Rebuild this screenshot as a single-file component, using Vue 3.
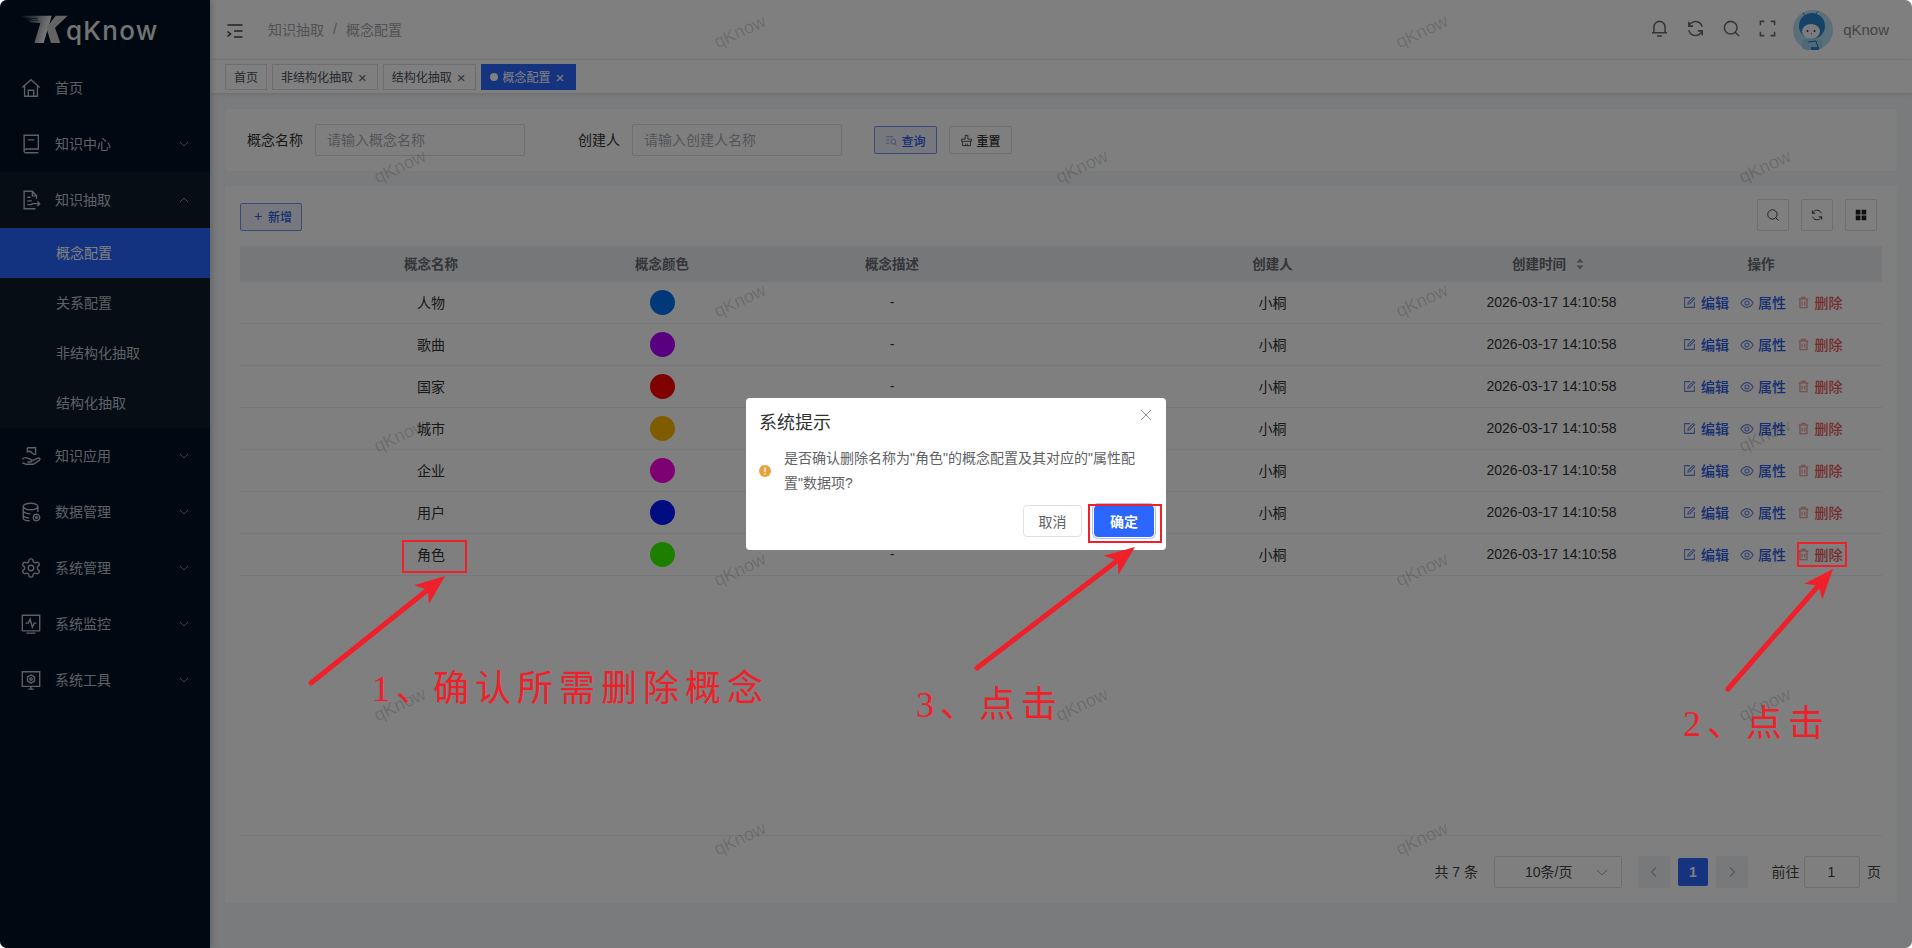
<script setup>
const icons = {
  home: 'M2.5 11.5 12 3l9.5 8.5M5 9.5V21h14V9.5M9 21v-6.5h6V21',
  book: 'M4.5 19.5V2.5h15.5v15H7a2.2 2.2 0 0 0-2.5 2 1.8 1.8 0 0 0 2.5 2h13M8.5 7.5h7',
  doc: 'M18 10.5V7.5L13.5 2.5H4.5v19H17M13.5 2.5v5H18M8 9h3.5M8 13h5M8 17h5.5M12.5 16h9M19 13.5l2.5 2.5-2.5 2.5',
  hand: 'M8 3h9v7.5M8 3v4.5c2.5-1.5 4-.5 5.5 1.5 1 1 2.5 1.5 3.5 1.5M2.5 15.5c2-2 4.5-2 6.5-1l3 1.5c1.5.8 1 2.5-.5 2.5H8M12 17.5l7.5-3.2c2-.5 3 1.2 1.5 2.5L14.5 21H6.5l-4-1.5',
  db: 'M3.5 6c0-2 3.8-3.5 8-3.5s8 1.5 8 3.5-3.8 3.5-8 3.5-8-1.5-8-3.5zM3.5 6v12.5c0 1.8 3 3 7 3M19.5 6v6M3.5 10.5c0 2 3.8 3.5 8 3.5M3.5 15c0 2 3 3.3 6.5 3.5M14.5 18a3.5 3.5 0 1 0 7 0 3.5 3.5 0 1 0-7 0zM17 18a1 1 0 1 0 2 0 1 1 0 1 0-2 0z',
  gear: 'M12.22 2h-.44a2 2 0 0 0-2 2v.18a2 2 0 0 1-1 1.73l-.43.25a2 2 0 0 1-2 0l-.15-.08a2 2 0 0 0-2.73.73l-.22.38a2 2 0 0 0 .73 2.73l.15.1a2 2 0 0 1 1 1.72v.51a2 2 0 0 1-1 1.74l-.15.09a2 2 0 0 0-.73 2.73l.22.38a2 2 0 0 0 2.73.73l.15-.08a2 2 0 0 1 2 0l.43.25a2 2 0 0 1 1 1.73V20a2 2 0 0 0 2 2h.44a2 2 0 0 0 2-2v-.18a2 2 0 0 1 1-1.73l.43-.25a2 2 0 0 1 2 0l.15.08a2 2 0 0 0 2.73-.73l.22-.39a2 2 0 0 0-.73-2.73l-.15-.08a2 2 0 0 1-1-1.74v-.5a2 2 0 0 1 1-1.74l.15-.09a2 2 0 0 0 .73-2.73l-.22-.38a2 2 0 0 0-2.73-.73l-.15.08a2 2 0 0 1-2 0l-.43-.25a2 2 0 0 1-1-1.73V4a2 2 0 0 0-2-2zM9 12a3 3 0 1 0 6 0 3 3 0 1 0-6 0z',
  pulse: 'M2.5 2.5h19v17h-19zM7 22h10M6 11h3l2-4.5 2.5 9 2-4.5h2.5',
  tool: 'M2.5 3h19v16h-19zM9 22h6M12 19v3M12 6.5l3.8 2.2v4.6L12 15.5l-3.8-2.2V8.7zM10.7 11a1.3 1.3 0 1 0 2.6 0 1.3 1.3 0 1 0-2.6 0z',
  bell: 'M5 17.5V10a7 7 0 0 1 14 0v7.5M2.5 17.5h19M9 21.5h6',
  refresh: 'M20.5 10A8.8 8.8 0 0 0 5.5 6L3.5 8.5M3.5 14A8.8 8.8 0 0 0 18.5 18l2-2.5M3.5 3.5v5.5h5.5M20.5 20.5V15H15',
  search: 'M3 11a8 8 0 1 0 16 0 8 8 0 1 0-16 0zM17 17l4.5 4.5',
  full: 'M3 8V3h5M16 3h5v5M21 16v5h-5M8 21H3v-5',
  edit: 'M13 3H3v18h18V11M9 15l.8-3.5L19 2.5 21.5 5l-9 9.2z',
  eye: 'M1.5 12C5 6 9 4.5 12 4.5S19 6 22.5 12C19 18 15 19.5 12 19.5S5 18 1.5 12zM8.5 12a3.5 3.5 0 1 0 7 0 3.5 3.5 0 1 0-7 0z',
  trash: 'M3 5.5h18M9 5.5v-3h6v3M5.5 5.5v16h13v-16M9.5 10v7.5M14.5 10v7.5',
  query: 'M2 5h13M2 11h6M2 17h6M11 14a4.5 4.5 0 1 0 9 0 4.5 4.5 0 1 0-9 0zM18.5 18l3 3',
  reset: 'M9.5 2.5h5v7H21v4H3v-4h6.5zM4.5 13.5v8h15v-8M10 21.5v-4M14 21.5v-4',
  sync: 'M19.5 9A8 8 0 0 0 6 6.5L4 9M4.5 15A8 8 0 0 0 18 17.5l2-2.5M4 4v5h5M20 20v-5h-5',
}

const menusTop = [
  { text: '首页', icon: 'home' },
  { text: '知识中心', icon: 'book', arrow: true },
]
const subs = ['概念配置', '关系配置', '非结构化抽取', '结构化抽取']
const menusBottom = [
  { text: '知识应用', icon: 'hand' },
  { text: '数据管理', icon: 'db' },
  { text: '系统管理', icon: 'gear' },
  { text: '系统监控', icon: 'pulse' },
  { text: '系统工具', icon: 'tool' },
]
const tags = ['非结构化抽取', '结构化抽取']
const topIcons = ['bell', 'refresh', 'search', 'full']
const rows = [
  { name: '人物', color: '#0070f0' },
  { name: '歌曲', color: '#b000ff' },
  { name: '国家', color: '#ff0000' },
  { name: '城市', color: '#ffb800' },
  { name: '企业', color: '#ff00e6' },
  { name: '用户', color: '#0018ff' },
  { name: '角色', color: '#38ff00' },
]

const watermarks = []
;[32, 167, 301, 436, 570, 705, 839].forEach((y, i) => {
  const xs = i % 2 === 0 ? [740, 1422] : [400, 1082, 1765]
  xs.forEach((x) => watermarks.push({ left: x + 'px', top: y + 'px' }))
})

function arrow(x1, y1, x2, y2) {
  const len = Math.hypot(x2 - x1, y2 - y1)
  const ux = (x2 - x1) / len
  const uy = (y2 - y1) / len
  const nx = -uy
  const ny = ux
  const at = (back, side) => `${(x2 - ux * back + nx * side).toFixed(1)},${(y2 - uy * back + ny * side).toFixed(1)}`
  return {
    shaft: { x1, y1, x2: x2 - ux * 18, y2: y2 - uy * 18 },
    head: [at(0, 0), at(30, 12), at(22, 0), at(30, -12)].join(' '),
  }
}
const arrows = [arrow(311, 683, 445, 576), arrow(1728, 689, 1833, 569), arrow(977, 668, 1135, 547)]
const boxes = [
  { x: 403, y: 541, w: 63, h: 31 },
  { x: 1798, y: 543, w: 48, h: 23 },
  { x: 1089, y: 505, w: 72, h: 37 },
]
</script>

<template>
  <div class="page">
    <aside class="side">
      <div class="logo">
        <svg class="logo-mark" viewBox="0 0 150 95" width="50" height="31.7">
          <defs>
            <linearGradient id="kg" x1="0" y1="0" x2="1" y2="0.3">
              <stop offset="0" stop-color="#1a2430" />
              <stop offset="1" stop-color="#fff" />
            </linearGradient>
          </defs>
          <path d="M4 2H92L68 84H40L58 24L30 22L14 14L34 14L4 6Z" fill="url(#kg)" />
          <path d="M8 10H50M20 16H52" stroke="#001024" stroke-width="2" />
          <path d="M140 2H104L76 38L90 84H118L102 38Z" fill="#c8c8c8" />
        </svg>
        <span class="logo-text">qKnow</span>
      </div>
      <nav>
        <div v-for="m in menusTop" :key="m.text" class="menu">
          <svg class="m-icon" viewBox="0 0 24 24"><path :d="icons[m.icon]" /></svg>
          <span class="m-text">{{ m.text }}</span>
          <svg v-if="m.arrow" class="chev" viewBox="0 0 10 10"><path d="M1 3l4 4 4-4" /></svg>
        </div>
        <div class="group">
          <div class="menu">
            <svg class="m-icon" viewBox="0 0 24 24"><path :d="icons.doc" /></svg>
            <span class="m-text">知识抽取</span>
            <svg class="chev" viewBox="0 0 10 10"><path d="M1 7l4-4 4 4" /></svg>
          </div>
          <div v-for="(s, i) in subs" :key="s" class="sub" :class="{ active: i === 0 }">{{ s }}</div>
        </div>
        <div v-for="m in menusBottom" :key="m.text" class="menu">
          <svg class="m-icon" viewBox="0 0 24 24"><path :d="icons[m.icon]" /></svg>
          <span class="m-text">{{ m.text }}</span>
          <svg class="chev" viewBox="0 0 10 10"><path d="M1 3l4 4 4-4" /></svg>
        </div>
      </nav>
    </aside>

    <div class="main">
      <header class="topbar">
        <svg class="collapse" viewBox="0 0 16 14"><path d="M0.5 1h15M7 7h8.5M7 13h8.5M0.5 7.5l3 2.5-3 2.5" /></svg>
        <span class="crumb">知识抽取</span>
        <span class="crumb slash">/</span>
        <span class="crumb">概念配置</span>
        <div class="top-right">
          <svg v-for="n in topIcons" :key="n" class="t-icon" viewBox="0 0 24 24"><path :d="icons[n]" /></svg>
          <svg class="avatar" viewBox="0 0 40 40">
            <circle cx="20" cy="20" r="20" fill="#b6def6" />
            <path d="M12 6 10 2.5M23 4l2-3" stroke="#2a7fc8" stroke-width="1" fill="none" />
            <circle cx="19" cy="16" r="13" fill="#2a86d0" />
            <ellipse cx="18" cy="21.5" rx="9" ry="7.5" fill="#f4f8fa" />
            <circle cx="14.5" cy="21" r="1" fill="#123a60" />
            <circle cx="21.5" cy="21" r="1" fill="#123a60" />
            <path d="M18 24h1" stroke="#123a60" stroke-width=".8" />
            <path d="M9 38V30c5-2 15-2 20 0v8a20 20 0 0 1-20 0z" fill="#9fd0ee" />
            <path d="M15 32l8-1 2 6" stroke="#1f6fb8" stroke-width="1" fill="none" />
            <path d="M18 37h8v2.600a20 20 0 0 1-8 .4z" fill="#2a86d0" />
          </svg>
          <span class="uname">qKnow</span>
        </div>
      </header>

      <div class="tagbar">
        <span class="tag">首页</span>
        <span v-for="t in tags" :key="t" class="tag close">{{ t }}<i class="x">×</i></span>
        <span class="tag close on"><b class="dot"></b>概念配置<i class="x">×</i></span>
      </div>

      <section class="card search">
        <label>概念名称</label>
        <input class="ipt" placeholder="请输入概念名称" />
        <label class="l2">创建人</label>
        <input class="ipt" placeholder="请输入创建人名称" />
        <button class="btn primary first">
          <svg viewBox="0 0 24 24"><path :d="icons.query" /></svg>查询
        </button>
        <button class="btn">
          <svg viewBox="0 0 24 24"><path :d="icons.reset" /></svg>重置
        </button>
      </section>

      <section class="card list">
        <div class="tools">
          <button class="btn primary add"><span class="plus">+</span>新增</button>
          <div class="tool-right">
            <span class="sq"><svg viewBox="0 0 24 24"><path :d="icons.search" /></svg></span>
            <span class="sq"><svg viewBox="0 0 24 24"><path :d="icons.sync" /></svg></span>
            <span class="sq">
              <svg viewBox="0 0 24 24"><path class="solid" d="M3 3h8v8H3zM13 3h8v8h-8zM3 13h8v8H3zM13 13h8v8h-8z" /></svg>
            </span>
          </div>
        </div>
        <div class="table">
          <div class="tr th">
            <div>概念名称</div>
            <div>概念颜色</div>
            <div>概念描述</div>
            <div>创建人</div>
            <div class="sort">创建时间
              <svg viewBox="0 0 8 12" width="8" height="12"><path d="M4 0.5 7.5 4.5H.5zM4 11.5.5 7.5h7z" /></svg>
            </div>
            <div>操作</div>
          </div>
          <div v-for="r in rows" :key="r.name" class="tr td">
            <div>{{ r.name }}</div>
            <div class="colour"><span class="swatch" :style="{ background: r.color }"></span></div>
            <div>-</div>
            <div>小桐</div>
            <div class="time">2026-03-17 14:10:58</div>
            <div class="ops">
              <span class="op"><svg viewBox="0 0 24 24"><path :d="icons.edit" /></svg>编辑</span>
              <span class="op"><svg viewBox="0 0 24 24"><path :d="icons.eye" /></svg>属性</span>
              <span class="op del"><svg viewBox="0 0 24 24"><path :d="icons.trash" /></svg>删除</span>
            </div>
          </div>
        </div>
        <div class="pager">
          <span class="total">共 7 条</span>
          <span class="select">10条/页
            <svg viewBox="0 0 12 12" width="12" height="12"><path d="M1 4l5 5 5-5" /></svg>
          </span>
          <span class="pg">
            <svg viewBox="0 0 12 12" width="12" height="12"><path d="M8 1.5 3.5 6 8 10.5" /></svg>
          </span>
          <span class="num">1</span>
          <span class="pg">
            <svg viewBox="0 0 12 12" width="12" height="12"><path d="M4 1.5 8.5 6 4 10.5" /></svg>
          </span>
          <span class="goto">前往</span>
          <input class="jump" value="1" />
          <span class="unit">页</span>
        </div>
      </section>
    </div>

    <div class="wm-layer">
      <span v-for="(w, i) in watermarks" :key="i" class="wm" :style="w">qKnow</span>
    </div>

    <div class="mask"></div>

    <div class="dialog">
      <div class="d-head">
        <span>系统提示</span>
        <svg class="d-close" viewBox="0 0 12 12" width="12" height="12"><path d="M1 1l10 10M11 1 1 11" /></svg>
      </div>
      <div class="d-body">
        <svg class="warn" viewBox="0 0 12 12" width="12" height="12">
          <circle cx="6" cy="6" r="6" fill="#e6a23c" />
          <path d="M6 2.5v4.2M6 8.3v1.2" stroke="#fff" stroke-width="1.4" />
        </svg>
        <p>是否确认删除名称为"角色"的概念配置及其对应的"属性配置"数据项?</p>
      </div>
      <div class="d-foot">
        <button class="d-btn">取消</button>
        <button class="d-btn ok">确定</button>
      </div>
    </div>

    <svg class="marks" viewBox="0 0 1912 948" width="1912" height="948">
      <rect v-for="(b, i) in boxes" :key="'b' + i" :x="b.x" :y="b.y" :width="b.w" :height="b.h" class="mark-box" />
      <g v-for="(a, i) in arrows" :key="'a' + i">
        <line :x1="a.shaft.x1" :y1="a.shaft.y1" :x2="a.shaft.x2" :y2="a.shaft.y2" class="mark-line" />
        <polygon :points="a.head" class="mark-head" />
      </g>
    </svg>
    <span class="note n1">1<i class="pun">、</i>确认所需删除概念</span>
    <span class="note n2">3<i class="pun">、</i>点击</span>
    <span class="note n3">2<i class="pun">、</i>点击</span>
  </div>
</template>

<style>
html, body { margin: 0; background: #fff; }
</style>

<style scoped>
* { box-sizing: border-box; }
.page {
  position: relative;
  display: flex;
  width: 1912px;
  height: 948px;
  overflow: hidden;
  border-radius: 7px;
  background: #f5f6f8;
  font-family: "Liberation Sans", "Noto Sans CJK SC", sans-serif;
  font-size: 14px;
  color: #333;
}
.side {
  flex: 0 0 210px;
  background: #001024;
  color: #b9c2cb;
  box-shadow: 2px 0 6px rgba(0, 21, 41, .2);
  z-index: 1;
}
.logo { height: 60px; display: flex; align-items: center; padding-left: 21px; }
.logo-mark { margin-right: -5px; margin-top: 1px; }
.logo-text {
  font-family: Inter, "Liberation Sans", sans-serif;
  font-size: 26px;
  font-weight: 500;
  letter-spacing: 1.2px;
  color: #e6e6e6;
}
.menu { height: 56px; display: flex; align-items: center; padding-left: 20px; position: relative; }
.m-text { margin-top: -2px; }
.m-icon { width: 22px; height: 22px; margin-right: 13px; fill: none; stroke: currentColor; stroke-width: 1.5; }
.chev { position: absolute; left: 179px; top: 23px; width: 10px; height: 10px; fill: none; stroke: currentColor; stroke-width: 1; opacity: .75; }
.group { background: #0c1b2b; }
.sub { height: 50px; line-height: 50px; padding-left: 56px; }
.sub.active { background: #2664ff; color: #fff; }

.main { flex: 1; display: flex; flex-direction: column; min-width: 0; }
.topbar {
  height: 60px;
  flex: none;
  display: flex;
  align-items: center;
  padding-left: 17px;
  background: #fff;
  border-bottom: 1px solid #f2f2f2;
}
.collapse { width: 16px; height: 14px; margin-right: 25px; fill: none; stroke: #444; stroke-width: 1.6; margin-top: 2px; }
.crumb { color: #a2a5ab; margin-top: -2px; }
.slash { margin: -2px 9px 0; }
.top-right { margin-left: auto; display: flex; align-items: center; padding-right: 23px; }
.t-icon { width: 19px; height: 19px; margin-right: 17px; fill: none; stroke: #6b6b6b; stroke-width: 1.9; margin-top: -2px; }
.t-icon:nth-child(4) { margin-right: 16px; }
.avatar { width: 40px; height: 40px; }
.uname { margin-left: 10px; font-size: 15px; color: #8a8a8a; }

.tagbar {
  height: 33px;
  flex: none;
  display: flex;
  gap: 5px;
  padding: 4px 0 0 15px;
  background: #fff;
  box-shadow: 0 1px 4px rgba(0, 0, 0, .12);
  position: relative;
}
.tag {
  height: 26px;
  padding: 0 8px 2px;
  display: inline-flex;
  align-items: center;
  border: 1px solid #d8dce5;
  font-size: 12px;
  color: #495060;
  background: #fff;
}
.tag.close { padding-right: 9px; }
.tag.close:nth-child(2) { padding-right: 10px; }
.tag.close.on { padding-right: 11px; }
.x { font-style: normal; font-size: 15px; margin-left: 5px; margin-top: 2px; line-height: 1; color: #666; font-family: "Liberation Sans", sans-serif; }
.tag.on { background: #2a66ff; border-color: #2a66ff; color: #fff; }
.tag.on .x { color: #fff; }
.dot { width: 8px; height: 8px; border-radius: 50%; background: #fff; margin-right: 5px; margin-top: 2px; }

.card { background: #fff; margin: 0 15px; border-radius: 2px; }
.search {
  margin-top: 16px;
  height: 62px;
  flex: none;
  display: flex;
  align-items: center;
  padding-left: 22px;
}
.search label { margin: -2px 12px 0 0; color: #333; }
.search .l2 { margin-left: 53px; }
.ipt {
  width: 210px;
  height: 32px;
  border: 1px solid #dcdfe6;
  border-radius: 2px;
  padding: 0 11px;
  font: inherit;
  color: #606266;
  outline: none;
}
.ipt::placeholder { color: #a8abb2; }
.btn {
  height: 28px;
  width: 63px;
  display: inline-flex;
  align-items: center;
  justify-content: center;
  gap: 3px;
  border: 1px solid #dcdfe6;
  border-radius: 2px;
  background: #fff;
  font: inherit;
  font-size: 12px;
  font-weight: 500;
  color: #333;
  padding: 0;
  margin-left: 12px;
}
.btn svg { width: 13px; height: 13px; fill: none; stroke: currentColor; stroke-width: 1.5; }
.btn.primary { background: #eef1fb; border-color: #6f94f0; color: #2a5ae6; }
.btn.first { margin-left: 32px; }
.btn.primary svg { stroke: #7a8fc8; }

.list { flex: none; height: 717px; margin-top: 15px; padding: 13px 15px 15px; display: flex; flex-direction: column; }
.tools { height: 32px; display: flex; justify-content: space-between; align-items: flex-end; margin-bottom: 15px; flex: none; }
.add { margin-left: 0; width: 62px; padding: 0 0 2px 4px; }
.plus { font-size: 14px; font-weight: 400; margin-right: 3px; }
.tool-right { display: flex; gap: 12px; padding-right: 5px; }
.sq {
  width: 32px;
  height: 32px;
  border: 1px solid #dcdfe6;
  border-radius: 2px;
  display: flex;
  align-items: center;
  justify-content: center;
}
.sq svg { width: 14px; height: 14px; fill: none; stroke: #333; stroke-width: 1.6; }
.sq svg .solid { fill: #222; stroke: none; }

.table { flex: 1; border-bottom: 1px solid #ebeef5; }
.tr { display: grid; grid-template-columns: 382px 80px 380px 381px 177px 242px; align-items: center; text-align: center; }
.tr > div { min-width: 0; }
.th { height: 36px; background: #eceef1; font-weight: 700; color: #666a70; font-size: 13.5px; padding-bottom: 2px; }
.sort { display: flex; align-items: center; justify-content: center; gap: 10px; padding-right: 7px; }
.sort svg { fill: #8f8f8f; margin-top: 2px; }
.td { height: 42px; border-bottom: 1px solid #ebeef5; }
.td > div { height: 41px; display: flex; align-items: center; justify-content: center; padding-bottom: 2px; }
.td > .colour { padding-bottom: 0; }
.swatch { width: 25px; height: 25px; border-radius: 50%; display: block; }
.time { font-size: 14px; white-space: nowrap; }
.td .ops { justify-content: flex-start; padding-left: 43px; gap: 10.5px; }
.op { display: inline-flex; align-items: center; color: #2a5ae6; font-weight: 500; white-space: nowrap; }
.op svg { width: 13px; height: 13px; margin: 2px 5px 0 0; fill: none; stroke: #6585d8; stroke-width: 1.9; }
.op:nth-child(2) svg { width: 14px; height: 14px; margin-right: 4.5px; }
.op.del { color: #e85a5a; }
.op.del svg { stroke: #e58a8a; }

.pager { flex: none; height: 52px; padding-top: 20px; display: flex; align-items: center; justify-content: flex-end; padding-right: 1px; }
.total { margin: -2px 16px 0 0; white-space: nowrap; color: #444; }
.select {
  position: relative;
  width: 128px;
  height: 32px;
  border: 1px solid #dcdfe6;
  border-radius: 2px;
  display: flex;
  align-items: center;
  padding: 0 0 2px 30px;
  color: #444;
}
.select svg { position: absolute; right: 13px; top: 9px; fill: none; stroke: #aaa; stroke-width: 1; }
.pg {
  width: 32px;
  height: 32px;
  background: #f0f2f5;
  border-radius: 2px;
  display: flex;
  align-items: center;
  justify-content: center;
  margin-left: 16px;
}
.pg svg { fill: none; stroke: #b0b3b8; stroke-width: 1.2; }
.num {
  width: 30px;
  height: 28px;
  margin: 0 8px;
  background: #2a66ff;
  border-radius: 2px;
  color: #fff;
  font-weight: 700;
  display: flex;
  align-items: center;
  justify-content: center;
}
.num + .pg { margin-left: 0; }
.goto { margin: -2px 4px 0 23.5px; color: #444; }
.jump {
  width: 56px;
  height: 32px;
  border: 1px solid #dcdfe6;
  border-radius: 2px;
  text-align: center;
  font: inherit;
  color: #444;
  outline: none;
}
.unit { margin: -2px 0 0 7.5px; color: #444; }

.wm-layer { position: absolute; inset: 0; pointer-events: none; z-index: 2; }
.wm {
  position: absolute;
  transform: translate(-50%, -50%) rotate(-25deg);
  font-size: 18px;
  color: rgba(0, 0, 0, .16);
  font-family: "Liberation Sans", sans-serif;
}
.mask { position: absolute; inset: 0; background: rgba(0, 0, 0, .5); z-index: 3; }

.dialog {
  position: absolute;
  left: 746px;
  top: 398px;
  width: 420px;
  height: 152px;
  background: #fff;
  border-radius: 4px;
  z-index: 4;
  padding: 0 11px 0 13px;
}
.d-head { display: flex; justify-content: space-between; height: 48px; padding-top: 13px; font-size: 18px; line-height: 24px; color: #303133; }
.d-close { fill: none; stroke: #909399; stroke-width: 1; margin: -2px 3px 0 0; }
.d-body { display: flex; align-items: center; height: 50px; }
.warn { flex: none; margin-right: 13px; margin-top: -1px; }
.d-body p { margin: 0; font-size: 14px; line-height: 25px; color: #606266; width: 352px; }
.d-foot { display: flex; justify-content: flex-end; align-items: center; gap: 12px; margin-top: 8px; height: 34px; padding-right: 1px; }
.d-btn {
  width: 59px;
  height: 32px;
  border: 1px solid #dcdfe6;
  border-radius: 4px;
  background: #fff;
  font: inherit;
  color: #606266;
  padding: 0;
}
.d-btn.ok {
  width: 60px;
  background: #2a66ff;
  border: 1px solid #2a66ff;
  color: #fff;
  font-weight: 700;
  box-shadow: 0 0 0 1px #fff, 0 0 0 2px #a8c2ff;
}

.marks { position: absolute; left: 0; top: 0; z-index: 5; pointer-events: none; }
.mark-box { fill: none; stroke: #f0202a; stroke-width: 2; }
.mark-line { stroke: #f0202a; stroke-width: 5; stroke-linecap: round; }
.mark-head { fill: #f0202a; }
.note {
  position: absolute;
  z-index: 6;
  font-family: "Liberation Serif", "Noto Sans CJK SC", serif;
  font-size: 36px;
  line-height: 44px;
  letter-spacing: 6px;
  color: #f0202a;
  white-space: nowrap;
  font-weight: 400;
}
.pun { font-style: normal; margin-right: -3px; }
.n1 .pun { margin-right: -5px; }
.n1 { left: 372px; top: 667px; }
.n2 { left: 916px; top: 683px; }
.n3 { left: 1683px; top: 702px; }
</style>
